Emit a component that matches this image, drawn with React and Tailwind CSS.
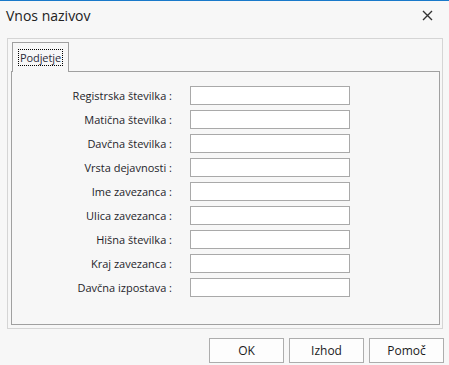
import React from 'react';

const fields = [
    'Registrska številka :',
    'Matična številka :',
    'Davčna številka :',
    'Vrsta dejavnosti :',
    'Ime zavezanca :',
    'Ulica zavezanca :',
    'Hišna številka :',
    'Kraj zavezanca :',
    'Davčna izpostava :',
];

const Button = ({ children }) => (
    <button className="w-[75px] h-[25px] bg-[#fdfdfd] border border-[#adadad] text-[12px] text-[#1b1b1b]">
        {children}
    </button>
);

export default function App() {
    return (
        <div
            className="w-[449px] h-[365px] bg-[#f7f7f7] border-t border-[#1979ca] flex flex-col overflow-hidden"
            style={{ fontFamily: '"Open Sans", "Noto Sans", sans-serif' }}
        >
            {/* title bar */}
            <div className="h-[29px] flex items-center justify-between pl-[6px] pr-[16px]">
                <span className="text-[14px] text-[#222] leading-none">Vnos nazivov</span>
                <svg width="11" height="11" viewBox="0 0 11 11" className="text-[#333]">
                    <path d="M1 1 L10 10 M10 1 L1 10" stroke="currentColor" strokeWidth="1.4" />
                </svg>
            </div>

            {/* group box */}
            <div className="ml-[7px] mt-[8px] w-[436px] h-[291px] border border-[#d5d5d5] pl-[3px] pr-[3px] pt-[3px] flex flex-col">
                <div className="flex">
                    <div className="ml-[1px] w-[57px] h-[30px] border border-b-0 border-[#a0a0a0] pl-[5px] pt-[6px] relative z-10 bg-[#f7f7f7] -mb-px">
                        <div className="w-[45px] h-[17px] border border-dotted border-black flex items-center justify-center text-[11px] tracking-[-0.1px] text-[#2a2a3a] leading-none">
                            Podjetje
                        </div>
                    </div>
                </div>
                <div className="w-[429px] h-[254px] border border-[#a0a0a0] pt-[14px]">
                    <div className="flex flex-col gap-[5px]">
                        {fields.map((f) => (
                            <div key={f} className="flex items-center h-[19px]">
                                <span className="w-[160px] text-right text-[11px] text-[#1e1e2a] leading-none whitespace-nowrap">
                                    {f}
                                </span>
                                <div className="ml-[18px] w-[160px] h-[19px] bg-white border border-[#a9a9a9]" />
                            </div>
                        ))}
                    </div>
                </div>
            </div>

            {/* buttons */}
            <div className="flex justify-end gap-[5px] pr-[5px] mt-[9px]">
                <Button>OK</Button>
                <Button>Izhod</Button>
                <Button>Pomoč</Button>
            </div>
        </div>
    );
}
